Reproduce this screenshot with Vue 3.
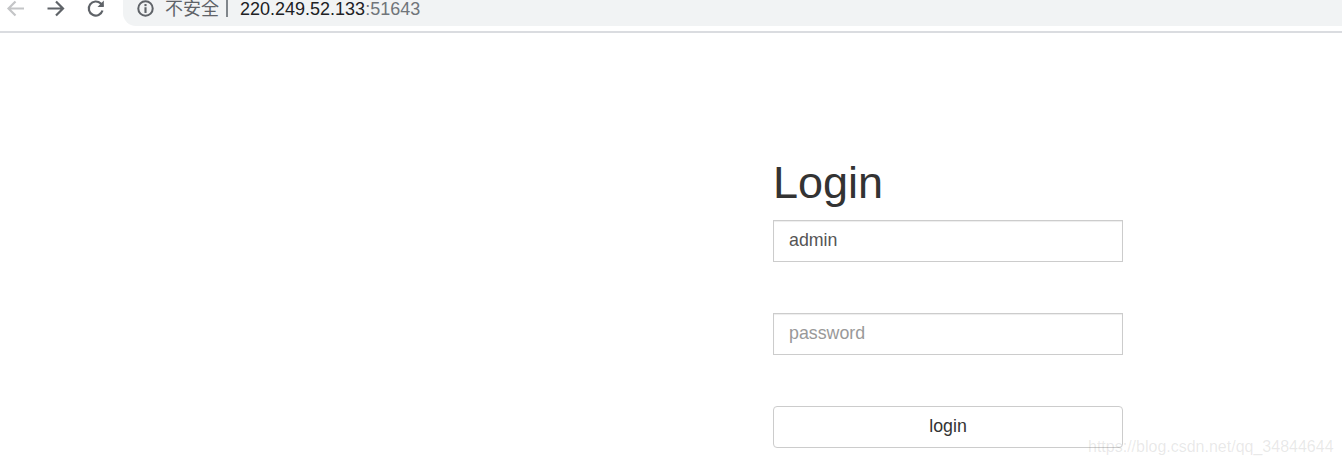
<script setup>
import { ref } from 'vue'

const username = ref('admin')
const password = ref('')
</script>

<template>
  <div class="page">
    <div class="toolbar">
      <div class="nav">
        <svg class="nav-icon" viewBox="0 0 20 20" fill="none" stroke="#c4c5c7" stroke-width="2.200">
          <path d="M18 9.500H3M9.500 2.500L2.500 9.500L9.500 16.500" />
        </svg>
        <svg class="nav-icon" viewBox="0 0 20 20" fill="none" stroke="#5f6368" stroke-width="2.200">
          <path d="M1.500 9.500H16.500M10 2.500L17 9.500L10 16.500" />
        </svg>
        <svg class="nav-icon" viewBox="0 0 20 20" fill="none" stroke="#5f6368" stroke-width="2.200">
          <path d="M16.500 11.500A7 7 0 1 1 14.800 4.600L17 7" />
          <path d="M17.800 1.500V8H11.500" fill="#5f6368" stroke="none" />
        </svg>
      </div>
      <div class="address">
        <svg class="info" viewBox="0 0 16 16">
          <circle cx="8" cy="8" r="6.800" fill="none" stroke="#5f6368" stroke-width="1.900" />
          <rect x="7" y="3.800" width="2" height="2" fill="#5f6368" />
          <rect x="7" y="6.800" width="2" height="5.400" fill="#5f6368" />
        </svg>
        <span class="insecure">不安全</span>
        <span class="divider"></span>
        <span class="host">220.249.52.133</span><span class="port">:51643</span>
      </div>
    </div>

    <div class="content">
      <form class="login" @submit.prevent>
        <h1>Login</h1>
        <input v-model="username" class="field" type="text" placeholder="username">
        <input v-model="password" class="field" type="password" placeholder="password">
        <button class="submit" type="submit">login</button>
      </form>
    </div>

    <span class="watermark">https://blog.csdn.net/qq_34844644</span>
  </div>
</template>

<style scoped>
.page {
  position: relative;
  height: 465px;
  overflow: hidden;
  background: #fff;
  font-family: "Liberation Sans", Arial, sans-serif;
}

.toolbar {
  display: flex;
  align-items: flex-start;
  height: 31px;
  padding-left: 6px;
  border-bottom: 2px solid #dadce0;
  box-sizing: content-box;
}

.nav {
  display: flex;
  gap: 20px;
  width: 117px;
  margin-top: -1px;
}

.nav-icon {
  width: 20px;
  height: 20px;
  flex: none;
}

.address {
  flex: 1;
  display: flex;
  align-items: center;
  height: 26px;
  padding: 0 0 9px 14px;
  box-sizing: border-box;
  background: #f1f3f4;
  border-radius: 0 0 0 13px;
  font-size: 18px;
  line-height: 18px;
}

.info {
  width: 17px;
  height: 17px;
  flex: none;
  margin-right: 11px;
}

.insecure {
  color: #5f6368;
  font-family: "Liberation Sans", "Noto Sans CJK SC", sans-serif;
}

.divider {
  width: 2px;
  height: 17px;
  background: #80868b;
  margin: 0 12px 0 7px;
}

.host {
  color: #202124;
}

.port {
  color: #70757a;
}

.content {
  padding: 124px 0 0 773px;
}

.login {
  display: flex;
  flex-direction: column;
  width: 350px;
}

h1 {
  margin: 0 0 11px;
  font-size: 45px;
  font-weight: 400;
  line-height: 52px;
  color: #333;
}

.field {
  width: 100%;
  height: 42px;
  padding: 0 15px 2px;
  margin-bottom: 51px;
  box-sizing: border-box;
  border: 1px solid #ccc;
  border-radius: 0;
  box-shadow: inset 0 1px 1px rgba(0, 0, 0, 0.075);
  outline: none;
  font-family: inherit;
  font-size: 17.800px;
  color: #555;
  background: #fff;
}

.field::placeholder {
  color: #999;
  opacity: 1;
}

.submit {
  width: 100%;
  height: 42px;
  padding: 0 0 2px;
  box-sizing: border-box;
  border: 1px solid #ccc;
  border-radius: 4px;
  background: #fff;
  font-family: inherit;
  font-size: 17.800px;
  color: #333;
}

.watermark {
  position: absolute;
  left: 1088px;
  top: 437px;
  font-size: 16px;
  line-height: 20px;
  color: rgba(120, 120, 120, 0.17);
  white-space: nowrap;
}
</style>
